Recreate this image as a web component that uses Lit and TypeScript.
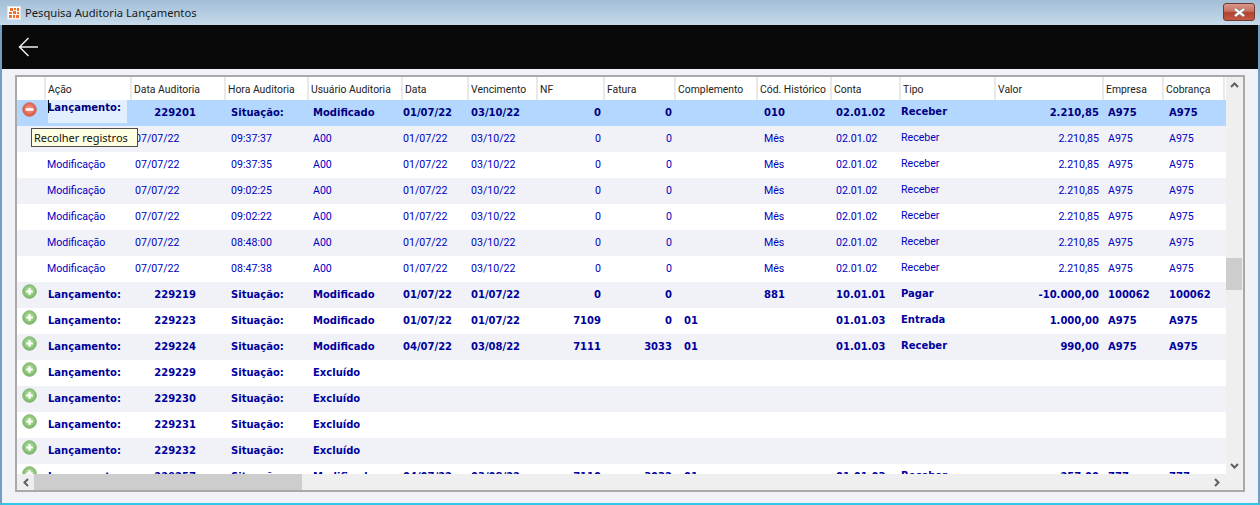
import { LitElement, html, css, svg } from "lit";
import { customElement } from "lit/decorators.js";

const COLS = [29, 86, 94, 83, 94, 66, 69, 67, 71, 82, 74, 69, 95, 108, 60, 61];
const HEADS = ["", "Ação", "Data Auditoria", "Hora Auditoria", "Usuário Auditoria", "Data", "Vencimento", "NF", "Fatura", "Complemento", "Cód. Histórico", "Conta", "Tipo", "Valor", "Empresa", "Cobrança"];

type G = { id: string; sit: string; d?: string; v?: string; nf?: string; fat?: string; comp?: string; cod?: string; conta?: string; tipo?: string; valor?: string; e?: string; c?: string };
const detail = [
  ["07/07/22", "09:37:37"],
  ["07/07/22", "09:37:35"],
  ["07/07/22", "09:02:25"],
  ["07/07/22", "09:02:22"],
  ["07/07/22", "08:48:00"],
  ["07/07/22", "08:47:38"],
];
const groups: G[] = [
  { id: "229219", sit: "Modificado", d: "01/07/22", v: "01/07/22", nf: "0", fat: "0", comp: "", cod: "881", conta: "10.01.01", tipo: "Pagar", valor: "-10.000,00", e: "100062", c: "100062" },
  { id: "229223", sit: "Modificado", d: "01/07/22", v: "01/07/22", nf: "7109", fat: "0", comp: "01", cod: "", conta: "01.01.03", tipo: "Entrada", valor: "1.000,00", e: "A975", c: "A975" },
  { id: "229224", sit: "Modificado", d: "04/07/22", v: "03/08/22", nf: "7111", fat: "3033", comp: "01", cod: "", conta: "01.01.03", tipo: "Receber", valor: "990,00", e: "A975", c: "A975" },
  { id: "229229", sit: "Excluído" },
  { id: "229230", sit: "Excluído" },
  { id: "229231", sit: "Excluído" },
  { id: "229232", sit: "Excluído" },
  { id: "229257", sit: "Modificado", d: "04/07/22", v: "03/08/22", nf: "7110", fat: "3032", comp: "01", cod: "", conta: "01.01.03", tipo: "Receber", valor: "257,00", e: "777", c: "777" },
];

const roundIcon = (minus: boolean) => {
  const id = minus ? "m" : "p";
  const stops = minus ? ["#f4a899", "#e8705f", "#d9503f"] : ["#bfe3ae", "#93cc7e", "#6fb35a"];
  return svg`<svg class="rnd" width="15" height="15" viewBox="0 0 15 15">
    <defs><radialGradient id=${id} cx=".5" cy=".45" r=".55">
      <stop offset="0" stop-color=${stops[0]} /><stop offset=".6" stop-color=${stops[1]} /><stop offset="1" stop-color=${stops[2]} />
    </radialGradient></defs>
    <circle cx="7.5" cy="7.5" r="6.8" fill=${`url(#${id})`} stroke=${minus ? "#c4705f" : "#8ab57c"} stroke-width="1" />
    ${minus
      ? svg`<rect x="3.5" y="6.2" width="8" height="2.6" rx=".5" fill="#fff" />`
      : svg`<path d="M6.4 4.2h2.2v2.2h2.2v2.2H8.6v2.2H6.4V8.6H4.2V6.4h2.2z" fill="#fff" />`}
  </svg>`;
};

@customElement("app-root")
export class AppRoot extends LitElement {
  static styles = css`
    :host { display: block; width: 1260px; height: 505px; overflow: hidden; position: relative;
      font-family: "Roboto", "Noto Sans", sans-serif; font-size: 10.6px; background: #f0f2f8; }
    .win { height: 505px; display: flex; flex-direction: column; border-left: 2px solid #6f9fc4; border-right: 2px solid #6f9fc4; border-bottom: 2px solid #2fc6e8; box-sizing: border-box; }
    .title { height: 25px; margin: 0 -2px; flex: none; display: flex; align-items: center; gap: 4px; padding: 0 5px 0 7px;
      background: linear-gradient(#a3bed6, #b4cce1 50%, #c6daea); color: #1a1a1a; font-family: "Noto Sans", sans-serif; font-size: 11.2px; }
    .logo { width: 14px; height: 14px; flex: none; display: block; }
    .ttext { flex: 1; }
    .close { width: 32px; height: 18px; margin-top: -1px; box-sizing: border-box; border: 1px solid #6e3a34; border-radius: 3px;
      background: linear-gradient(#d9998c, #c8705f 45%, #b3402f 55%, #c25a48); display: flex; align-items: center; justify-content: center; }
    .bar { height: 44px; flex: none; background: #090909; display: flex; align-items: center; padding-left: 16px; }
    .body { flex: 1; min-height: 0; padding: 6px 13px 11px 13px; }
    .grid { height: 100%; box-sizing: border-box; border: 2px solid #a9a9a9; background: #fff;
      display: grid; grid-template-columns: 1fr 17px; grid-template-rows: 1fr 16px; }
    .view { overflow: hidden; min-width: 0; min-height: 0; }
    .row { display: flex; height: 26px; width: 1210px; }
    .head { height: 23px; }
    .hc { box-sizing: border-box; padding: 6px 0 0 2px; border-right: 2px solid #e9e9e9; color: #222; font-size: 10.4px; white-space: nowrap; overflow: hidden; height: 23px; flex: none; }
    .alt { background: #f0f2f8; }
    .sel { background: #b3d7ff; }
    .cell { box-sizing: border-box; white-space: nowrap; padding-top: 6px; color: #0000c0; overflow: hidden; flex: none; }
    .g .cell { font-family: "DejaVu Sans", sans-serif; font-weight: 700; font-size: 10px; color: #00009c; padding-top: 7px; }
    .sel .cell { color: #000080; }
    .r { text-align: right; }
    .cell.up { padding-top: 5px; }
    .g .cell.up { padding-top: 6px; }
    .g .cell.ic { padding: 2px 0 0 5px; }
    .rnd { display: block; }
    .focus { position: relative; }
    .g .cell.focus { overflow: visible; }
    .focus > .fill { position: absolute; left: 2px; top: 0; width: 79px; height: 23px; background: #e2efff; line-height: 15px; }
    .focus > .caret { position: absolute; left: 2px; top: 0; width: 1px; height: 13px; background: #000; }
    .sbv { background: #efefef; display: flex; flex-direction: column; position: relative; align-items: center; }
    .sbh { background: #efefef; display: flex; align-items: center; }
    .thumbv { position: absolute; top: 181px; left: 0; width: 16px; height: 32px; background: #cdcdcd; }
    .thumbh { flex: none; width: 268px; height: 16px; margin-left: 17px; margin-right: auto; background: #cdcdcd; }
    .corner { background: #efefef; }
    .arrow { flex: none; display: block; }
    .arrow.au { margin-top: 5px; }
    .arrow.ad { margin-top: auto; margin-bottom: 5px; }
    .arrow.al { position: absolute; margin-left: 6px; }
    .arrow.ar { margin-right: 6px; }
    .tip { position: absolute; left: 31px; top: 128px; width: 107px; height: 19px; box-sizing: border-box; border: 1px solid #4d4d4d;
      background: #ffffe1; color: #111; padding: 1px 0 0 2px; white-space: nowrap; font-family: "Noto Sans", sans-serif; font-size: 11px; }
  `;

  cellsFor(vals: string[], group: boolean) {
    const lefts = group
      ? [0, 2, 0, 5, 4, 0, 2, 0, 0, 8, 6, 4, 0, 0, 4, 5]
      : [0, 1, 3, 5, 4, 0, 2, 0, 0, 8, 6, 4, 0, 0, 4, 5];
    return vals.map((v, i) => {
      const right = i === 7 || i === 8 || i === 13 || (group && i === 2);
      const pr = i === 7 ? 4 : i === 8 ? 4 : i === 13 ? 5 : i === 2 && group ? 30 : 0;
      const cls = `cell ${right ? "r" : ""} ${i === 12 ? "up" : ""}`;
      return html`<div class=${cls} style="width:${COLS[i]}px;padding-left:${lefts[i]}px;padding-right:${pr}px">${v}</div>`;
    });
  }

  render() {
    const first = ["", "", "229201", "Situação:", "Modificado", "01/07/22", "03/10/22", "0", "0", "", "010", "02.01.02", "Receber", "2.210,85", "A975", "A975"];
    return html`
      <div class="win">
        <div class="title">
          <svg class="logo" viewBox="0 0 14 14">
            <rect x=".5" y=".5" width="13" height="13" fill="#fff" stroke="#dfe7ee" />
            <path d="M3 2h3v3H3zM7 2h2v2H7zM10 2h2v3h-2zM2 6h3v2H2zM6 5h3v3H6zM10 6h2v2h-2zM2 9h3v3H2zM6 9h2v3H6zM9 9h3v3H9z" fill="#f2702a" />
          </svg>
          <span class="ttext">Pesquisa Auditoria Lançamentos</span>
          <div class="close">
            <svg width="13" height="9" viewBox="0 0 13 9"><path d="M2 1l9 7M11 1 2 8" stroke="#8a8a8a" stroke-width="3.4" /><path d="M2 1l9 7M11 1 2 8" stroke="#fff" stroke-width="2.2" /></svg>
          </div>
        </div>
        <div class="bar">
          <svg width="21" height="20" viewBox="0 0 21 20"><path d="M20 10H2M10.5 1 1.5 10l9 9" fill="none" stroke="#eee" stroke-width="1.5" /></svg>
        </div>
        <div class="body">
          <div class="grid">
            <div class="view">
              <div class="row head">
                ${HEADS.map((h, i) => html`<div class="hc" style="width:${COLS[i]}px">${h}</div>`)}
              </div>
              <div class="row g sel">
                <div class="cell ic" style="width:${COLS[0]}px">${roundIcon(true)}</div>
                <div class="cell focus" style="width:${COLS[1]}px"><div class="fill">Lançamento:</div><div class="caret"></div></div>
                ${this.cellsFor(first, true).slice(2)}
              </div>
              ${detail.map((d, i) => html`
                <div class="row ${i % 2 === 0 ? "alt" : ""}">
                  ${this.cellsFor(["", "Modificação", d[0], d[1], "A00", "01/07/22", "03/10/22", "0", "0", "", "Mês", "02.01.02", "Receber", "2.210,85", "A975", "A975"], false)}
                </div>`)}
              ${groups.map((g, i) => html`
                <div class="row g ${i % 2 === 1 ? "" : "alt"}">
                  <div class="cell ic" style="width:${COLS[0]}px">${roundIcon(false)}</div>
                  ${this.cellsFor(["", "Lançamento:", g.id, "Situação:", g.sit, g.d ?? "", g.v ?? "", g.nf ?? "", g.fat ?? "", g.comp ?? "", g.cod ?? "", g.conta ?? "", g.tipo ?? "", g.valor ?? "", g.e ?? "", g.c ?? ""], true).slice(1)}
                </div>`)}
            </div>
            <div class="sbv">
              <svg class="arrow au" width="9" height="6" viewBox="0 0 9 6"><path d="M1 5l3.5-3.5L8 5" fill="none" stroke="#606060" stroke-width="2" /></svg>
              <div class="thumbv"></div>
              <svg class="arrow ad" width="9" height="6" viewBox="0 0 9 6"><path d="M1 1l3.5 3.5L8 1" fill="none" stroke="#606060" stroke-width="2" /></svg>
            </div>
            <div class="sbh">
              <svg class="arrow al" width="6" height="9" viewBox="0 0 6 9"><path d="M5 1 1.5 4.5 5 8" fill="none" stroke="#606060" stroke-width="2" /></svg>
              <div class="thumbh"></div>
              <svg class="arrow ar" width="6" height="9" viewBox="0 0 6 9"><path d="M1 1l3.5 3.5L1 8" fill="none" stroke="#606060" stroke-width="2" /></svg>
            </div>
            <div class="corner"></div>
          </div>
        </div>
        <div class="tip">Recolher registros</div>
      </div>
    `;
  }
}
